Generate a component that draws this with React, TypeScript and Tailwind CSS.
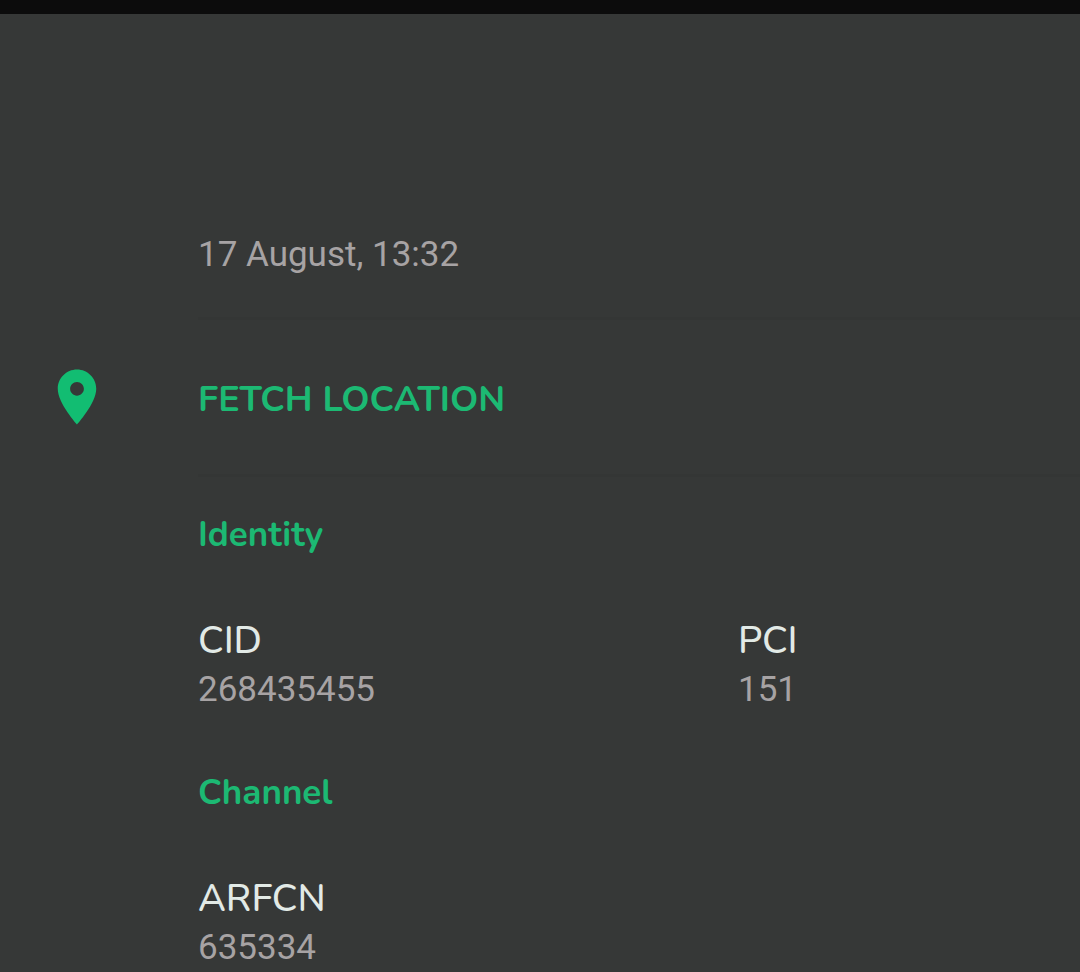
interface Field {
  label: string
  value: string
}

interface Section {
  title: string
  fields: Field[]
}

const sections: Section[] = [
  {
    title: 'Identity',
    fields: [
      { label: 'CID', value: '268435455' },
      { label: 'PCI', value: '151' },
    ],
  },
  {
    title: 'Channel',
    fields: [{ label: 'ARFCN', value: '635334' }],
  },
]

function PinIcon() {
  return (
    <svg viewBox="0 0 24 24" className="w-[66px] h-[66px] shrink-0" fill="currentColor" aria-hidden="true">
      <path d="M12 2C8.13 2 5 5.13 5 9c0 5.25 7 13 7 13s7-7.75 7-13c0-3.87-3.13-7-7-7zm0 9.5c-1.38 0-2.5-1.12-2.5-2.5s1.12-2.5 2.5-2.5 2.5 1.12 2.5 2.5-1.12 2.5-2.5 2.5z" />
    </svg>
  )
}

function Divider() {
  return <hr className="ml-[198px] h-[3px] border-0 bg-[#343635]" />
}

function CellSection({ title, fields }: Section) {
  return (
    <section className="pt-[33px]">
      <h2 className="pl-[198px] text-[35px] leading-[50px] font-bold text-[#1cb973]">{title}</h2>
      <dl className="grid grid-cols-2 pt-[54px] pb-[23px]">
        {fields.map((field) => (
          <div key={field.label} className="pl-[198px]">
            <dt className="text-[38px] leading-[54px] font-medium text-[#e2eae6]">{field.label}</dt>
            <dd className="font-[Roboto,sans-serif] text-[35px] leading-[44px] text-[#a7a3a4]">
              {field.value}
            </dd>
          </div>
        ))}
      </dl>
    </section>
  )
}

export default function App() {
  return (
    <div className="min-h-screen overflow-hidden bg-[#363837] font-[Nunito,Lato,sans-serif]">
      <header className="h-[14px] bg-[#0c0c0c]" />
      <main>
        <p className="pt-[219px] pb-10 pl-[198px] font-[Roboto,sans-serif] text-[35px] leading-[44px] text-[#a7a3a4]">
          <time>17 August, 13:32</time>
        </p>
        <Divider />
        <button
          type="button"
          className="flex h-[154px] w-full items-center gap-[88px] pl-11 text-left text-[36px] font-bold text-[#1cb973]"
        >
          <span className="text-[#12bd72]">
            <PinIcon />
          </span>
          <span className="pt-1.5">FETCH LOCATION</span>
        </button>
        <Divider />
        {sections.map((section) => (
          <CellSection key={section.title} {...section} />
        ))}
      </main>
    </div>
  )
}
